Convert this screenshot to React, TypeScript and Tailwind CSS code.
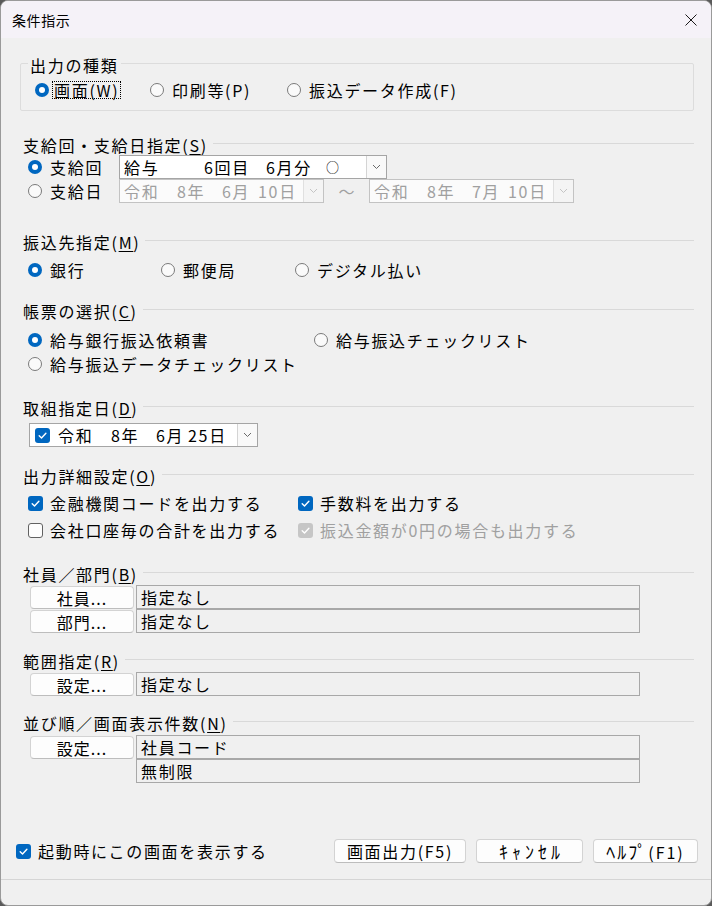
import React from "react";

type Kids = { children?: React.ReactNode };

// small down arrow used by the combo / date pickers
function Chevron({ color }: { color: string }) {
  return (
    <svg width="9" height="6" viewBox="0 0 9 6" fill="none">
      <path d="M1 1 L4.5 4.5 L8 1" stroke={color} strokeWidth="1" />
    </svg>
  );
}

function Tick() {
  return (
    <svg width="11" height="11" viewBox="0 0 11 11" fill="none">
      <path d="M2.2 5.8 L4.5 8 L8.9 3.2" stroke="white" strokeWidth="1.4" strokeLinecap="round" strokeLinejoin="round" />
    </svg>
  );
}

function Radio({ checked, focus, children }: Kids & { checked?: boolean; focus?: boolean }) {
  return (
    <div className="flex items-center h-[18px] whitespace-nowrap">
      {checked ? (
        <span className="w-[14px] h-[14px] shrink-0 rounded-full bg-[#0067c0] flex items-center justify-center">
          <span className="w-[6px] h-[6px] rounded-full bg-white" />
        </span>
      ) : (
        <span className="w-[14px] h-[14px] shrink-0 rounded-full border border-[#7a7a7a] bg-[#fafafa]" />
      )}
      {focus ? (
        <span className="ml-[3px] pl-[1px] pr-[1px] border border-dotted border-black leading-[16px]">{children}</span>
      ) : (
        <span className="ml-[8px]">{children}</span>
      )}
    </div>
  );
}

function CheckBox({ checked, disabled, children }: Kids & { checked?: boolean; disabled?: boolean }) {
  let box = "border border-[#616161] bg-[#fdfdfd]";
  if (checked) box = disabled ? "bg-[#c6c6c6]" : "bg-[#0067c0]";
  return (
    <div className="flex items-center h-[18px] whitespace-nowrap">
      <span className={`w-[15px] h-[15px] shrink-0 rounded-[3px] flex items-center justify-center ${box}`}>
        {checked && <Tick />}
      </span>
      <span className={disabled ? "ml-[7px] text-[#a0a0a0]" : "ml-[7px]"}>{children}</span>
    </div>
  );
}

function Drop({ disabled }: { disabled?: boolean }) {
  return (
    <span
      className={
        disabled
          ? "ml-auto h-full w-[20px] shrink-0 flex items-center justify-center border-l border-[#e0e0e0] bg-[#f4f4f4]"
          : "ml-auto h-full w-[20px] shrink-0 flex items-center justify-center border-l border-[#d4d4d4] bg-[#f9f9f9]"
      }
    >
      <Chevron color={disabled ? "#c4c4c4" : "#6a6a6a"} />
    </span>
  );
}

// 和暦の日付ピッカー（無効状態）
function EraPicker({ month, day }: { month: string; day: string }) {
  return (
    <div className="w-[205px] h-[24px] flex items-center border border-[#c3c3c3] bg-[#fbfbfb] text-[#a0a0a0] whitespace-nowrap">
      <span className="pl-[4px] w-[57px]">令和</span>
      <span className="w-[45px]">8年</span>
      <span className="w-[36px]">{month}</span>
      <span>{day}</span>
      <Drop disabled />
    </div>
  );
}

function Section({ label, mnemonic }: { label: string; mnemonic: string }) {
  return (
    <div className="flex items-center h-[18px]">
      <span className="shrink-0 whitespace-nowrap">
        {label}(<span className="underline underline-offset-2">{mnemonic}</span>)
      </span>
      <span className="flex-1 h-px bg-[#d9d9d9] ml-[5px] mb-[4px]" />
    </div>
  );
}

function PickButton({ children }: Kids) {
  return (
    <div className="w-[104px] h-[23px] shrink-0 mt-[1px] rounded-[4px] border border-[#d3d3d3] border-b-[#bdbdbd] bg-[#fdfdfd] flex items-center justify-center whitespace-nowrap tracking-[1px]">
      {children}
    </div>
  );
}

function ReadField({ children }: Kids) {
  return (
    <div className="w-[504px] h-[24px] shrink-0 border border-[#a8a8a8] bg-[#f0f0f0] pl-[4px] flex items-center whitespace-nowrap">
      {children}
    </div>
  );
}

function DialogButton({ w, children }: Kids & { w: string }) {
  return (
    <div className={`${w} h-[24px] rounded-[4px] border border-[#d3d3d3] border-b-[#bdbdbd] bg-[#fdfdfd] flex items-center justify-center whitespace-nowrap`}>
      {children}
    </div>
  );
}

export default function App() {
  return (
    <div className="w-[712px] h-[906px] bg-[#5a5a5a]">
      <div className="w-[712px] h-[906px] rounded-[8px] border border-[#9a9a9a] bg-[#f0f0f0] overflow-hidden flex flex-col text-black text-[16px] leading-[18px] tracking-[1.7px] font-['Noto_Sans_CJK_JP','Noto_Sans',sans-serif]">
        {/* タイトルバー */}
        <div className="h-[37px] shrink-0 bg-[#f5f2f8] flex items-center justify-between pl-[11px] pr-[14px]">
          <span className="text-[14px] tracking-[0.6px]">条件指示</span>
          <svg width="12" height="12" viewBox="0 0 12 12" fill="none">
            <path d="M0.5 0.5 L11.5 11.5 M11.5 0.5 L0.5 11.5" stroke="#1a1a1a" strokeWidth="1" />
          </svg>
        </div>

        {/* 出力の種類 */}
        <div className="relative mt-[25px] ml-[19px] mr-[17px] h-[48px] border border-[#dcdcdc] rounded-[2px] pt-[17px]">
          <span className="absolute left-[7px] -top-[8px] px-[2px] bg-[#f0f0f0] whitespace-nowrap">出力の種類</span>
          <div className="flex ml-[14px]">
            <div className="w-[115px]">
              <Radio checked focus>画面(W)</Radio>
            </div>
            <div className="w-[137px]">
              <Radio>印刷等(P)</Radio>
            </div>
            <Radio>振込データ作成(F)</Radio>
          </div>
        </div>

        <div className="pl-[22px] pr-[17px] flex flex-col">
          {/* 支給回・支給日 */}
          <div className="mt-[25px]">
            <Section label="支給回・支給日指定" mnemonic="S" />
          </div>
          <div className="mt-[1px] h-[24px] flex items-center ml-[5px]">
            <div className="w-[91px] shrink-0">
              <Radio checked>支給回</Radio>
            </div>
            <div className="w-[268px] h-[24px] flex items-center border border-[#a5a5a5] bg-white whitespace-nowrap">
              <span className="pl-[4px] w-[84px]">給与</span>
              <span className="w-[62px]">6回目</span>
              <span className="w-[60px]">6月分</span>
              <span className="text-[13px]">○</span>
              <Drop />
            </div>
          </div>
          <div className="h-[24px] flex items-center ml-[5px]">
            <div className="w-[91px] shrink-0">
              <Radio>支給日</Radio>
            </div>
            <EraPicker month="6月" day="10日" />
            <span className="w-[45px] text-center text-[#a0a0a0] tracking-normal">～</span>
            <EraPicker month="7月" day="10日" />
          </div>

          {/* 振込先 */}
          <div className="mt-[30px]">
            <Section label="振込先指定" mnemonic="M" />
          </div>
          <div className="mt-[10px] flex ml-[5px]">
            <div className="w-[133px] shrink-0">
              <Radio checked>銀行</Radio>
            </div>
            <div className="w-[134px] shrink-0">
              <Radio>郵便局</Radio>
            </div>
            <Radio>デジタル払い</Radio>
          </div>

          {/* 帳票 */}
          <div className="mt-[23px]">
            <Section label="帳票の選択" mnemonic="C" />
          </div>
          <div className="mt-[11px] flex ml-[5px]">
            <div className="w-[286px] shrink-0">
              <Radio checked>給与銀行振込依頼書</Radio>
            </div>
            <Radio>給与振込チェックリスト</Radio>
          </div>
          <div className="mt-[6px] ml-[5px]">
            <Radio>給与振込データチェックリスト</Radio>
          </div>

          {/* 取組指定日 */}
          <div className="mt-[26px]">
            <Section label="取組指定日" mnemonic="D" />
          </div>
          <div className="mt-[6px] ml-[6px] w-[229px] h-[24px] flex items-center border border-[#a5a5a5] bg-white whitespace-nowrap">
            <span className="ml-[5px] w-[15px] h-[15px] shrink-0 rounded-[3px] bg-[#0067c0] flex items-center justify-center">
              <Tick />
            </span>
            <span className="ml-[8px] w-[53px]">令和</span>
            <span className="w-[45px]">8年</span>
            <span className="w-[32px]">6月</span>
            <span>25日</span>
            <Drop />
          </div>

          {/* 出力詳細 */}
          <div className="mt-[20px]">
            <Section label="出力詳細設定" mnemonic="O" />
          </div>
          <div className="mt-[9px] flex ml-[5px]">
            <div className="w-[270px] shrink-0">
              <CheckBox checked>金融機関コードを出力する</CheckBox>
            </div>
            <CheckBox checked>手数料を出力する</CheckBox>
          </div>
          <div className="mt-[9px] flex ml-[5px]">
            <div className="w-[270px] shrink-0">
              <CheckBox>会社口座毎の合計を出力する</CheckBox>
            </div>
            <CheckBox checked disabled>振込金額が0円の場合も出力する</CheckBox>
          </div>

          {/* 社員／部門 */}
          <div className="mt-[26px]">
            <Section label="社員／部門" mnemonic="B" />
          </div>
          <div className="mt-[2px] flex ml-[7px]">
            <PickButton>社員...</PickButton>
            <div className="ml-[2px]">
              <ReadField>指定なし</ReadField>
            </div>
          </div>
          <div className="flex ml-[7px]">
            <PickButton>部門...</PickButton>
            <div className="ml-[2px]">
              <ReadField>指定なし</ReadField>
            </div>
          </div>

          {/* 範囲指定 */}
          <div className="mt-[19px]">
            <Section label="範囲指定" mnemonic="R" />
          </div>
          <div className="mt-[2px] flex ml-[7px]">
            <PickButton>設定...</PickButton>
            <div className="ml-[2px]">
              <ReadField>指定なし</ReadField>
            </div>
          </div>

          {/* 並び順 */}
          <div className="mt-[18px]">
            <Section label="並び順／画面表示件数" mnemonic="N" />
          </div>
          <div className="mt-[3px] flex ml-[7px]">
            <PickButton>設定...</PickButton>
            <div className="ml-[2px]">
              <ReadField>社員コード</ReadField>
            </div>
          </div>
          <div className="flex ml-[113px]">
            <ReadField>無制限</ReadField>
          </div>
        </div>

        {/* フッター */}
        <div className="mt-[56px] h-[24px] flex items-center pl-[15px] pr-[13px]">
          <CheckBox checked>起動時にこの画面を表示する</CheckBox>
          <div className="ml-auto flex gap-[10px]">
            <DialogButton w="w-[132px]">画面出力(F5)</DialogButton>
            <DialogButton w="w-[107px]">
              <span className="text-[18px] tracking-[4px] pl-[4px]">ｷｬﾝｾﾙ</span>
            </DialogButton>
            <DialogButton w="w-[105px]">
              <span className="tracking-[2px]">
                <span className="text-[18px]">ﾍﾙﾌﾟ</span>(F1)
              </span>
            </DialogButton>
          </div>
        </div>
        <div className="mt-[16px] h-px bg-[#d5d5d5]" />
        <div className="flex-1" />
      </div>
    </div>
  );
}
